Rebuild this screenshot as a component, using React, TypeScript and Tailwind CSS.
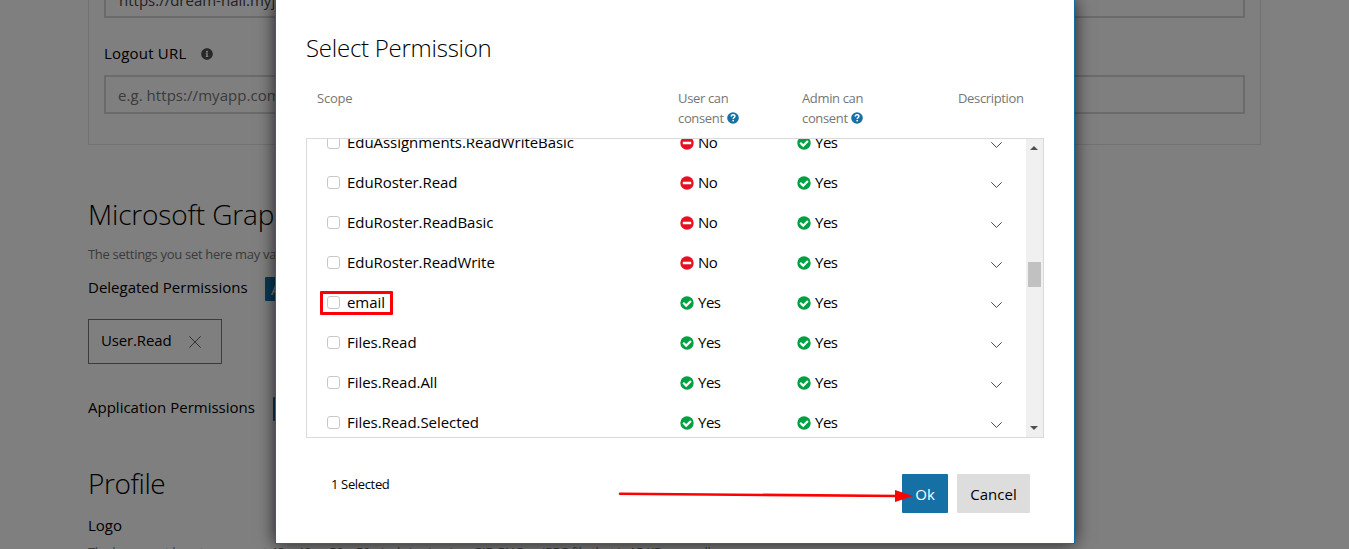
import { FaInfoCircle } from "react-icons/fa";

const scopes = [
  { name: "EduAssignments.ReadWriteBasic", user: false },
  { name: "EduRoster.Read", user: false },
  { name: "EduRoster.ReadBasic", user: false },
  { name: "EduRoster.ReadWrite", user: false },
  { name: "email", user: true, marked: true },
  { name: "Files.Read", user: true },
  { name: "Files.Read.All", user: true },
  { name: "Files.Read.Selected", user: true },
];

function Consent({ ok }: { ok: boolean }) {
  return (
    <span className="flex items-center">
      {ok ? (
        <svg className="mr-[4px] size-[14px]" viewBox="0 0 14 14" fill="none">
          <circle cx="7" cy="7" r="6.7" fill="#00a043" />
          <path d="M3.2 6.7 6.2 9.6 10.9 5" stroke="#fff" strokeWidth="2.2" />
        </svg>
      ) : (
        <svg className="mr-[4px] size-[14px]" viewBox="0 0 14 14">
          <circle cx="7" cy="7" r="6.7" fill="#e81123" />
          <rect x="2.8" y="5.8" width="8.4" height="2.4" rx=".3" fill="#fff" />
        </svg>
      )}
      <span className="-mt-px tracking-[-0.5px]">{ok ? "Yes" : "No"}</span>
    </span>
  );
}

function Help() {
  return (
    <svg className="size-3" viewBox="0 0 12 12" fill="none">
      <circle cx="6" cy="6" r="5.8" fill="#1570a6" />
      <path d="M4 4.4C4.5 3.1 5.2 2.8 6 2.8c1.1 0 1.9.6 1.9 1.5C7.9 5.5 6.2 5.5 6.2 7" stroke="#fff" strokeWidth="1.5" />
      <rect x="5.4" y="7.9" width="1.6" height="1.5" fill="#fff" />
    </svg>
  );
}

function Background() {
  return (
    <div className="ml-[88px] flex w-[1173px] flex-col">
      <section className="flex h-[145px] flex-col border border-t-0 border-[#e5e5e5] px-[15px]">
        <div className="flex h-[18px] items-end border-2 border-t-0 border-[#d6d6d6] px-[13px] text-[#444]">
          <span className="mb-[6px] leading-5">https://dream-hall.myjetbrains.com/hub</span>
        </div>
        <div className="mt-[25px] flex h-5 items-center gap-[14px]">
          <span className="tracking-[0.2px]">Logout URL</span>
          <FaInfoCircle className="mt-px size-3 text-[#505050]" />
        </div>
        <div className="mt-3 flex h-[39px] items-center border-2 border-[#d6d6d6] px-3 tracking-[0.05px] text-[#767676]">
          e.g. https://myapp.com/end-session
        </div>
      </section>
      <h2 className="mt-[49px] h-10 text-[28px] leading-10 font-light tracking-[-0.15px] whitespace-nowrap">Microsoft Graph Permissions</h2>
      <p className="mt-[10px] h-5 text-[13px] leading-5 tracking-[-0.3px] text-[#767676]">The settings you set here may vary from what you get in a token.</p>
      <div className="mt-[13px] flex h-6 items-center gap-[17px]">
        <span className="-mt-[5px] w-[160px]">Delegated Permissions</span>
        <span className="flex h-6 items-center rounded-[1px] bg-[#1570a6] px-[6px] text-white">Add</span>
      </div>
      <div className="mt-[18px] flex h-[45px] w-[134px] items-center border border-[#777] pl-3">
        <span className="w-[88px] pb-1 tracking-[-0.15px]">User.Read</span>
        <svg className="size-3" viewBox="0 0 12 12" fill="none" stroke="#555" strokeWidth=".9">
          <path d="M.3.3 11.7 11.7M11.7.3.3 11.7" />
        </svg>
      </div>
      <div className="mt-[33px] flex h-6 items-center gap-[17px]">
        <span className="-mt-[5px] w-[168px]">Application Permissions</span>
        <span className="flex h-6 items-center rounded-[1px] bg-[#1570a6] px-[6px] text-white">Add</span>
      </div>
      <h2 className="mt-[42px] h-10 text-[28px] leading-10 font-light tracking-[-0.4px]">Profile</h2>
      <div className="mt-[12px] h-5 leading-5">Logo</div>
      <p className="mt-[7px] text-[13px] leading-5 tracking-[-0.37px] whitespace-nowrap text-[#767676]">
        The logo must be a transparent 48 x 48 or 50 x 50 pixels in size, in a GIF, PNG or JPEG file that is 15 KB or smaller.
      </p>
    </div>
  );
}

function ScopeRow({ name, user, marked }: { name: string; user: boolean; marked?: boolean }) {
  return (
    <div className="relative flex h-10 shrink-0 items-center pl-5">
      <span className="mt-[-1px] mr-[7px] size-[13px] rounded-[3px] border border-[#c8c8c8]" />
      <span className="-mt-[2px] w-[333px] tracking-[-0.05px]">{name}</span>
      <span className="-mt-px w-[117px]"><Consent ok={user} /></span>
      <span className="-mt-px w-[194px]"><Consent ok /></span>
      <svg className="mt-1 h-[6px] w-[11px]" viewBox="0 0 11 6" fill="none" stroke="#444" strokeWidth="1">
        <path d="M.3.3 5.5 5.4 10.7.3" />
      </svg>
      {marked && <span className="absolute top-2 left-[13px] h-[24px] w-[73px] rounded-[1px] border-[3px] border-[#fb0007]" />}
    </div>
  );
}

function Dialog() {
  return (
    <div className="absolute top-0 left-[275px] flex h-[544px] w-[800px] flex-col border border-t-0 border-[#0f6ca6] bg-white px-[30px] shadow-[0_0_16px_rgba(0,0,0,0.75)]">
      <h1 className="mt-[28px] h-10 text-[24px] leading-10 font-light tracking-[-0.25px]">Select Permission</h1>
      <div className="mt-5 flex h-[50px] pl-[11px] text-[13px] leading-5 tracking-[-0.35px] text-[#767676]">
        <span className="w-[361px] tracking-[-0.2px]">Scope</span>
        <span className="w-[124px]">
          User can<br />
          <span className="flex items-center gap-[3px]">consent <Help /></span>
        </span>
        <span className="w-[156px]">
          Admin can<br />
          <span className="flex items-center gap-[3px]">consent <Help /></span>
        </span>
        <span>Description</span>
      </div>
      <div className="flex h-[300px] w-[738px] overflow-hidden border border-[#dadada]">
        <div className="-mt-4 flex flex-1 flex-col">
          {scopes.map((s) => <ScopeRow key={s.name} {...s} />)}
        </div>
        <div className="flex w-[17px] flex-col items-center bg-[#f0f0f0]">
          <svg className="mt-[7px] mr-px h-1 w-2" viewBox="0 0 8 4"><path d="M4 0 8 4H0Z" fill="#505050" /></svg>
          <div className="mt-[112px] h-[25px] w-[13px] bg-[#c1c1c1]" />
          <svg className="mt-auto mr-px mb-[7px] h-1 w-2" viewBox="0 0 8 4"><path d="M0 0H8L4 4Z" fill="#505050" /></svg>
        </div>
      </div>
      <div className="mt-9 flex h-[39px] pl-[25px]">
        <span className="flex-1 text-[13px] leading-5 tracking-[-0.35px]">1 Selected</span>
        <button className="mr-[9px] w-[46px] rounded-[1px] bg-[#1570a6] text-white">Ok</button>
        <button className="mr-[14px] w-[73px] rounded-[1px] bg-[#dddddd]">Cancel</button>
      </div>
      <svg className="absolute top-[488px] left-[342px] h-4 w-[296px]" viewBox="0 0 296 16">
        <path d="M2 5.8 280 8" stroke="#ff0000" strokeWidth="2.6" strokeLinecap="round" />
        <path d="M277 2 295 8 277 14Z" fill="#ff0000" />
      </svg>
    </div>
  );
}

export default function App() {
  return (
    <main className="relative h-[549px] w-[1349px] overflow-hidden bg-white font-['Open_Sans',sans-serif] text-[15px] leading-5 text-black">
      <Background />
      <div className="absolute inset-0 bg-black/50" />
      <Dialog />
    </main>
  );
}
